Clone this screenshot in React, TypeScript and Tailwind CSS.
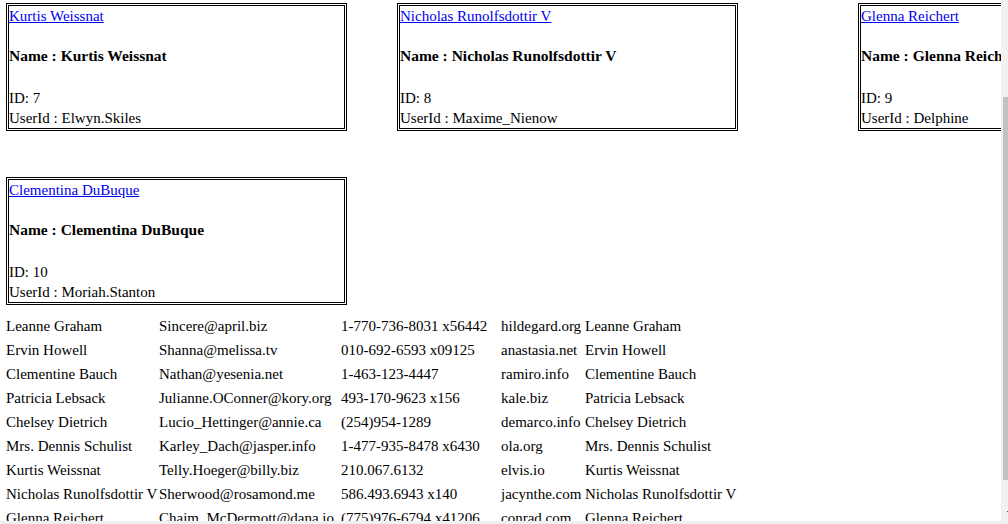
import React from 'react';

const cards = [
  { name: 'Kurtis Weissnat', id: 7, user: 'Elwyn.Skiles', gap: 'ml-[6px]' },
  { name: 'Nicholas Runolfsdottir V', id: 8, user: 'Maxime_Nienow', gap: 'ml-[50px]' },
  { name: 'Glenna Reichert', id: 9, user: 'Delphine', gap: 'ml-[120px]' },
];

const rows = [
  ['Leanne Graham', 'Sincere@april.biz', '1-770-736-8031 x56442', 'hildegard.org'],
  ['Ervin Howell', 'Shanna@melissa.tv', '010-692-6593 x09125', 'anastasia.net'],
  ['Clementine Bauch', 'Nathan@yesenia.net', '1-463-123-4447', 'ramiro.info'],
  ['Patricia Lebsack', 'Julianne.OConner@kory.org', '493-170-9623 x156', 'kale.biz'],
  ['Chelsey Dietrich', 'Lucio_Hettinger@annie.ca', '(254)954-1289', 'demarco.info'],
  ['Mrs. Dennis Schulist', 'Karley_Dach@jasper.info', '1-477-935-8478 x6430', 'ola.org'],
  ['Kurtis Weissnat', 'Telly.Hoeger@billy.biz', '210.067.6132', 'elvis.io'],
  ['Nicholas Runolfsdottir V', 'Sherwood@rosamond.me', '586.493.6943 x140', 'jacynthe.com'],
  ['Glenna Reichert', 'Chaim_McDermott@dana.io', '(775)976-6794 x41206', 'conrad.com'],
  ['Clementina DuBuque', 'Rey.Padberg@karina.biz', '024-648-3804', 'ambrose.net'],
];

const Card = ({ name, id, user, className = '' }: { name: string; id: number; user: string; className?: string }) => (
  <div className={`w-[341px] h-[128px] shrink-0 border-[3px] border-double border-black text-[15px] leading-[20px] ${className}`}>
    <a href="#" className="block text-[#0000ee] underline whitespace-nowrap">{name}</a>
    <h4 className="mt-[20px] mb-[22px] font-bold text-[15.5px] whitespace-nowrap">Name : {name}</h4>
    <div>ID: {id}</div>
    <div className="whitespace-nowrap">UserId : {user}</div>
  </div>
);

export default function App() {
  return (
    <div className="w-[1008px] h-[524px] flex overflow-hidden bg-white text-black font-['Liberation_Serif',serif]">
      <div className="w-[1001px] flex flex-col">
        <div className="flex-1 overflow-hidden pt-[3px]">
          <div className="flex">
            {cards.map((c) => (
              <Card key={c.id} name={c.name} id={c.id} user={c.user} className={c.gap} />
            ))}
          </div>
          <div className="flex mt-[46px]">
            <Card name="Clementina DuBuque" id={10} user="Moriah.Stanton" className="ml-[6px]" />
          </div>
          {/* users table */}
          <div className="mt-[9px] ml-[6px] text-[15px] leading-[24px]">
            {rows.map((r, i) => (
              <div key={i} className="grid grid-cols-[153px_182px_160px_84px_auto] whitespace-nowrap">
                <span>{r[0]}</span>
                <span>{r[1]}</span>
                <span>{r[2]}</span>
                <span>{r[3]}</span>
                <span>{r[0]}</span>
              </div>
            ))}
          </div>
        </div>
        <div className="h-[3px] bg-[#f0f0f0]" />
      </div>
      {/* scrollbar */}
      <div className="w-[7px] bg-[#f1f1f1] flex flex-col">
        <div className="h-[97px]" />
        <div className="h-[383px] ml-[2px] w-[5px] bg-[#c1c1c1]" />
        <div className="h-[31px]" />
        <div className="ml-[6px] w-px h-px bg-[#505050]" />
      </div>
    </div>
  );
}
